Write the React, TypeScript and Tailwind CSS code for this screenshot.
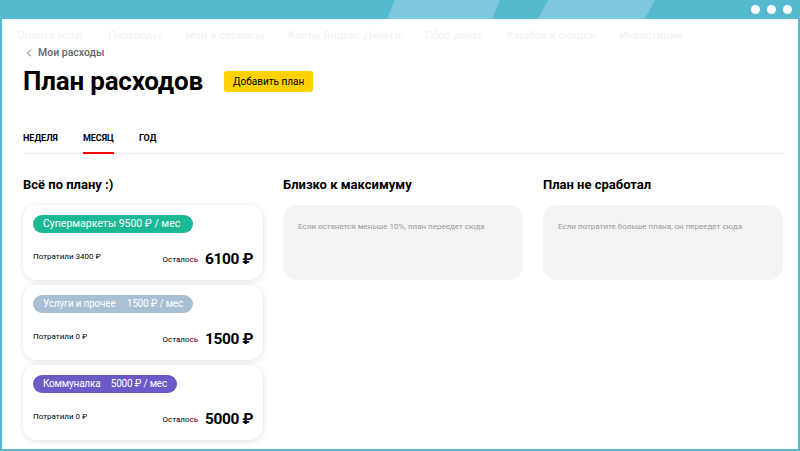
import { ChevronLeft } from 'lucide-react'

type Plan = {
  title: string
  limit: string
  spent: string
  left: string
  color: string
  split: boolean
  width: string
}

const plans: Plan[] = [
  { title: 'Супермаркеты', limit: '9500 ₽ / мес', spent: '3400 ₽', left: '6100 ₽', color: 'bg-[#1db997]', split: false, width: 'w-[160px]' },
  { title: 'Услуги и прочее', limit: '1500 ₽ / мес', spent: '0 ₽', left: '1500 ₽', color: 'bg-[#a9c0d4]', split: true, width: 'w-[160px]' },
  { title: 'Коммуналка', limit: '5000 ₽ / мес', spent: '0 ₽', left: '5000 ₽', color: 'bg-[#6b5ac8]', split: true, width: 'w-[144px]' },
]

const navItems = ['Оплата услуг', 'Переводы', 'Мои и сервисы', 'Карты Яндекс.Деньги', 'Сбор денег', 'Кэшбэк и скидки', 'Инвестиции']

function Header() {
  return (
    <div className="relative h-[19px] bg-[#55b9cf] shrink-0">
      {/* декоративные вкладки браузера */}
      <svg className="absolute inset-0" width="800" height="19" viewBox="0 0 800 19">
        <polygon points="395,0 500,0 492,19 387,19" fill="#7dc8da" />
        <polygon points="548,0 655,0 645,19 538,19" fill="#7dc8da" />
      </svg>
      <div className="absolute right-[8px] top-[5px] flex gap-[7px]">
        <span className="w-[9px] h-[9px] rounded-full bg-white" />
        <span className="w-[9px] h-[9px] rounded-full bg-white" />
        <span className="w-[9px] h-[9px] rounded-full bg-white" />
      </div>
    </div>
  )
}

function PlanCard({ plan }: { plan: Plan }) {
  return (
    <div className="h-[75px] rounded-[14px] bg-white shadow-[0_1px_6px_rgba(0,0,0,0.13)] px-[10px] pt-[10px]">
      <div className={`${plan.color} ${plan.width} flex h-[18px] rounded-full items-center justify-between px-[10px] text-white leading-none whitespace-nowrap`}>
        {plan.split ? (
          <>
            <span className="text-[10px] tracking-[-0.2px]">{plan.title}</span>
            <span className="text-[10px] tracking-[-0.2px]">{plan.limit}</span>
          </>
        ) : (
          <span className="text-[10.5px]">{plan.title} {plan.limit}</span>
        )}
      </div>
      <div className="flex items-end mt-[18px] whitespace-nowrap">
        <span className="text-[8px] text-black mb-[4px]">Потратили {plan.spent}</span>
        <span className="ml-auto text-[8px] text-black mb-[1px]">Осталось</span>
        <span className="ml-[7px] text-[15.5px] font-bold text-black leading-none tracking-[-0.4px]">{plan.left}</span>
      </div>
    </div>
  )
}

function EmptyColumn({ title, hint }: { title: string; hint: string }) {
  return (
    <div className="flex flex-col">
      <h2 className="text-[13px] font-bold leading-none h-[27px]">{title}</h2>
      <div className="h-[75px] rounded-[14px] bg-[#f4f4f4] px-[15px] pt-[16px] text-[8px] text-[#9a9a9a]">{hint}</div>
    </div>
  )
}

export default function App() {
  return (
    <div className="w-[800px] h-[451px] flex flex-col bg-white overflow-hidden" style={{ fontFamily: 'Roboto, "Noto Sans", sans-serif' }}>
      <Header />
      <div className="flex-1 border-x-2 border-b-2 border-[#55b9cf] flex flex-col overflow-hidden">
        <div className="h-[27px] flex gap-[24px] pl-[15px] pt-[10px] text-[11px] leading-[13px] text-[#f1f1f1] whitespace-nowrap">
          {navItems.map(item => (
            <span key={item}>{item}</span>
          ))}
        </div>
        <div className="pl-[21px] pr-[15px]">
          <a className="flex items-center gap-[3px] text-[10.5px] leading-[13px] text-[#666] font-medium h-[13px]">
            <ChevronLeft size={12} strokeWidth={2} className="text-[#666]" />
            <span>Мои расходы</span>
          </a>
          <div className="flex items-center mt-[7px] h-[30px]">
            <h1 className="text-[26px] font-bold leading-none tracking-[-0.2px] text-black">План расходов</h1>
            <button className="ml-[21px] h-[21px] px-[9px] rounded-[3px] bg-[#ffd200] text-[10px] text-black">Добавить план</button>
          </div>
          <div className="mt-[37px] flex gap-[25px] border-b border-[#ececec] text-[9px] leading-[11px] font-bold text-black">
            <span className="pb-[9px]">НЕДЕЛЯ</span>
            <span className="pb-[7px] border-b-2 border-[#f00] -mb-px">МЕСЯЦ</span>
            <span className="pb-[9px]">ГОД</span>
          </div>
          <div className="mt-[24px] grid grid-cols-[240px_240px_240px] gap-x-[20px]">
            <div className="flex flex-col">
              <h2 className="text-[13px] font-bold leading-none h-[27px]">Всё по плану :)</h2>
              <div className="flex flex-col gap-[5px]">
                {plans.map(plan => (
                  <PlanCard key={plan.title} plan={plan} />
                ))}
              </div>
            </div>
            <EmptyColumn title="Близко к максимуму" hint="Если останется меньше 10%, план переедет сюда" />
            <EmptyColumn title="План не сработал" hint="Если потратите больше плана, он переедет сюда" />
          </div>
        </div>
      </div>
    </div>
  )
}
